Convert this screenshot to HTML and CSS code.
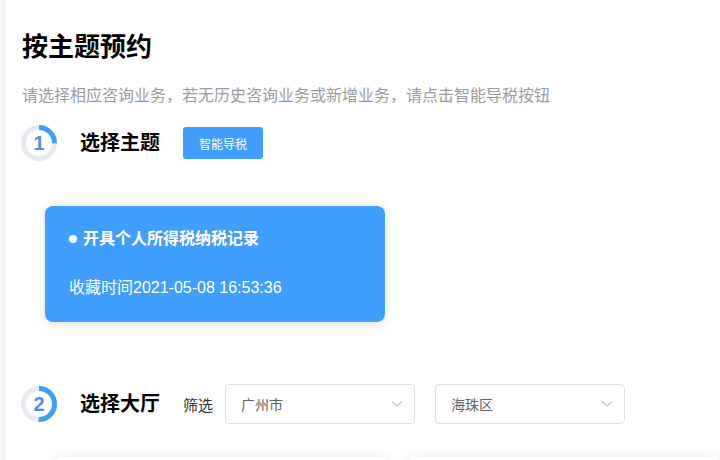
FILE: index.html
```html
<!DOCTYPE html>
<html lang="zh-CN">
<head>
<meta charset="utf-8">
<link rel="stylesheet" href="styles.css">
</head>
<body>
<div class="page">
  <div class="rail"></div>
  <main class="main">
    <h1 class="title">按主题预约</h1>
    <p class="sub">请选择相应咨询业务，若无历史咨询业务或新增业务，请点击智能导税按钮</p>

    <div class="step">
      <svg class="ring" viewBox="0 0 36 36" width="36" height="36">
        <circle cx="18" cy="18" r="15.5" fill="none" stroke="#e6ebf3" stroke-width="5"/>
        <circle cx="18" cy="18" r="15.5" fill="none" stroke="#409eff" stroke-width="5" stroke-dasharray="24.35 97.39" transform="rotate(-90 18 18)"/>
        <text x="18" y="25" text-anchor="middle" class="num">1</text>
      </svg>
      <h2 class="step-title">选择主题</h2>
      <button class="btn">智能导税</button>
    </div>

    <div class="fav">
      <div class="fav-name"><span class="dot"></span>开具个人所得税纳税记录</div>
      <div class="fav-time">收藏时间2021-05-08 16:53:36</div>
    </div>

    <div class="step step2">
      <svg class="ring" viewBox="0 0 36 36" width="36" height="36">
        <circle cx="18" cy="18" r="15.5" fill="none" stroke="#e6ebf3" stroke-width="5"/>
        <circle cx="18" cy="18" r="15.5" fill="none" stroke="#409eff" stroke-width="5" stroke-dasharray="48.7 97.39" transform="rotate(-90 18 18)"/>
        <text x="18" y="25" text-anchor="middle" class="num">2</text>
      </svg>
      <h2 class="step-title">选择大厅</h2>
      <span class="filter">筛选</span>
      <div class="select">
        <span>广州市</span>
        <svg class="chev" width="12" height="8" viewBox="0 0 12 8"><path d="M1 1.5 L6 6 L11 1.5" fill="none" stroke="#c0c4cc" stroke-width="1.2"/></svg>
      </div>
      <div class="select select-b">
        <span>海珠区</span>
        <svg class="chev" width="12" height="8" viewBox="0 0 12 8"><path d="M1 1.5 L6 6 L11 1.5" fill="none" stroke="#c0c4cc" stroke-width="1.2"/></svg>
      </div>
    </div>

    <div class="halls">
      <div class="hall"></div>
      <div class="hall"></div>
    </div>
  </main>
</div>
</body>
</html>
```

FILE: styles.css
```css
html, body {
  margin: 0;
  padding: 0;
  background: #fff;
}
body {
  font-family: "Liberation Sans", "Noto Sans CJK SC", sans-serif;
  color: #000;
}
.page {
  display: flex;
  height: 460px;
  overflow: hidden;
}
.rail {
  width: 6px;
  flex: none;
  background: #f4f5f6;
}
.main {
  flex: 1;
  padding: 29px 0 0 16px;
  min-width: 0;
}
.title {
  margin: 0;
  font-size: 26px;
  line-height: 36px;
  font-weight: 700;
  color: #000;
}
.sub {
  margin: 19px 0 0;
  font-size: 16px;
  line-height: 24px;
  color: #9a9ca3;
}
.step {
  display: flex;
  align-items: center;
  height: 36px;
  margin-top: 17px;
}
.ring {
  flex: none;
  margin-left: -1px;
}
.num {
  font-family: "Liberation Sans", sans-serif;
  font-size: 20px;
  font-weight: 700;
  fill: #4f8ef5;
}
.step-title {
  margin: 0 0 0 23px;
  font-size: 20px;
  line-height: 28px;
  font-weight: 700;
  color: #000;
}
.btn {
  margin-left: 23px;
  width: 80px;
  height: 32px;
  border: none;
  border-radius: 3px;
  background: #409eff;
  color: #fff;
  font-family: "Noto Sans CJK SC", sans-serif;
  font-size: 12px;
  padding: 0;
}
.fav {
  margin: 45px 0 0 23px;
  width: 340px;
  height: 116px;
  box-sizing: border-box;
  padding: 22px 24px 0;
  background: #409eff;
  border-radius: 8px;
  box-shadow: 0 2px 12px rgba(0, 0, 0, 0.12);
  color: #fff;
}
.fav-name {
  display: flex;
  align-items: center;
  font-size: 16px;
  line-height: 22px;
  font-weight: 700;
}
.dot {
  width: 8px;
  height: 8px;
  border-radius: 50%;
  background: #fff;
  margin-right: 6px;
}
.fav-time {
  margin-top: 27px;
  font-size: 16px;
  line-height: 22px;
}
.step2 {
  height: 40px;
  margin-top: 62px;
}
.filter {
  margin-left: 23px;
  font-size: 15px;
  color: #303133;
}
.select {
  margin-left: 12px;
  width: 190px;
  height: 40px;
  box-sizing: border-box;
  border: 1px solid #dcdfe6;
  border-radius: 4px;
  display: flex;
  align-items: center;
  justify-content: space-between;
  padding: 0 11px 0 15px;
  font-size: 14px;
  color: #606266;
}
.select-b {
  margin-left: 20px;
}
.chev {
  flex: none;
}
.halls {
  display: grid;
  grid-template-columns: 333px 1fr;
  gap: 20px;
  margin: 33px 0 0 33px;
}
.hall {
  height: 120px;
  background: #fff;
  border-radius: 8px;
  box-shadow: 0 0 12px rgba(0, 0, 0, 0.1);
}
```
